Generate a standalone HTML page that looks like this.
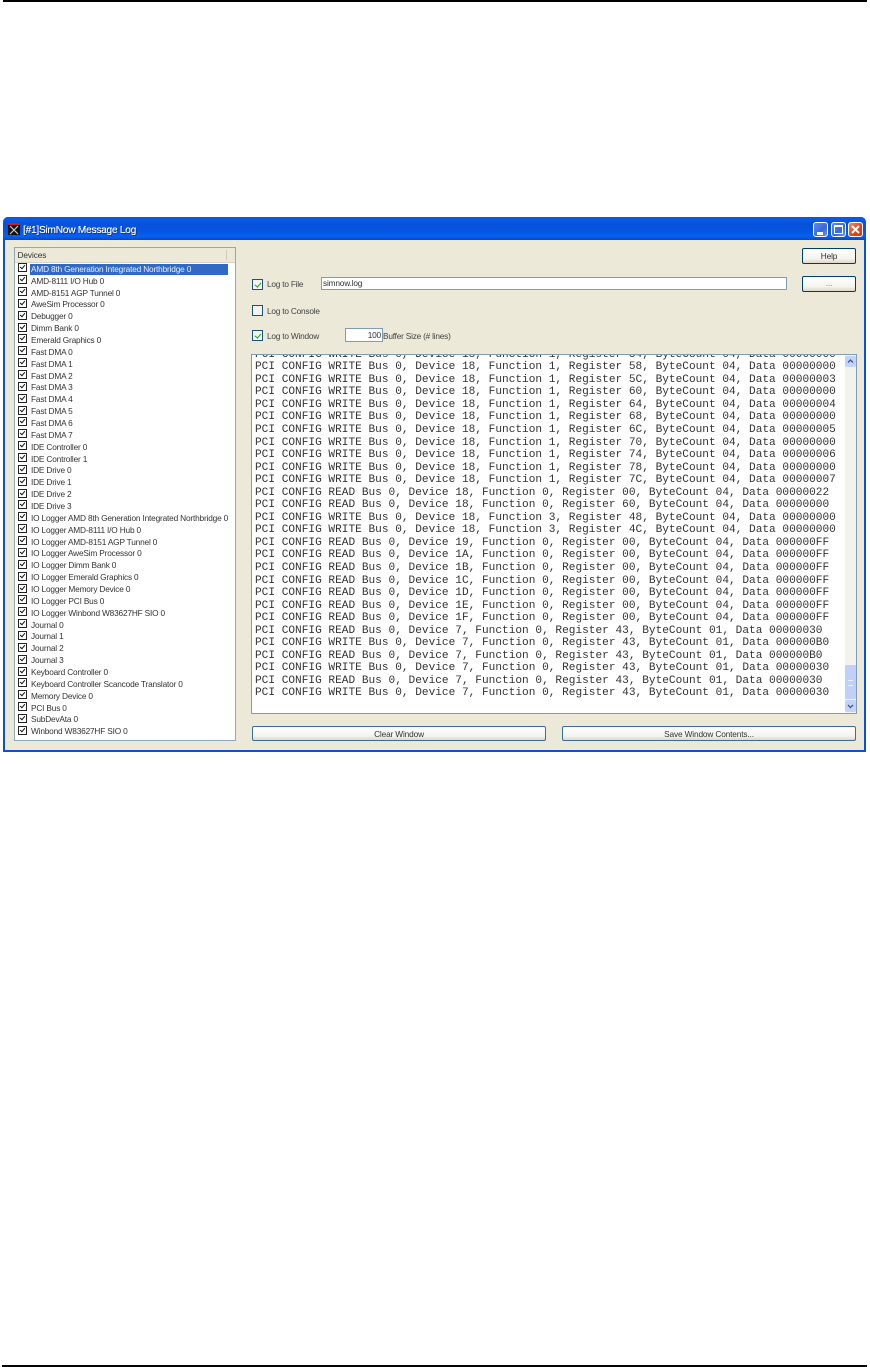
<!DOCTYPE html>
<html><head><meta charset="utf-8"><style>
html,body{margin:0;padding:0;background:#fff}
body{width:870px;height:1367px;position:relative;overflow:hidden;font-family:"Liberation Sans",sans-serif}
.a{position:absolute;white-space:nowrap}
.win{left:3px;top:217px;width:863px;height:535px;background:#0a4fd8;border-radius:5px 5px 0 0}
.title{left:3px;top:217px;width:863px;height:23px;border-radius:5px 5px 0 0;background:linear-gradient(#0a55d8 0,#0a5ae6 8%,#0652dc 30%,#0554e2 60%,#0660f0 85%,#0348c8 100%)}
.body{left:5px;top:240px;width:859px;height:510px;background:#ece9d8}
.tb{top:222px;width:15px;height:15px;border:1px solid #fff;box-sizing:border-box;border-radius:3px;background:linear-gradient(135deg,#5c8cf0,#3a66dc 60%,#6a96f4)}
.list{left:14px;top:247px;width:222px;height:494px;border:1px solid #8fa9bf;box-sizing:border-box;background:#fff}
.row{height:11.86px;line-height:11.86px;position:relative;font-size:8.3px;letter-spacing:-.18px;color:#333;padding-left:16px;white-space:nowrap}
.row i{position:absolute;left:3px;top:-0.5px;width:7px;height:7px;border:1px solid #222;background:#fff}
.row i:after{content:"";position:absolute;left:1.5px;top:0;width:2px;height:4px;border:solid #111;border-width:0 1.4px 1.4px 0;transform:rotate(40deg)}
.lbl{font-size:8.3px;letter-spacing:-.22px;color:#444;line-height:12px}
.cb{left:252px;width:11px;height:11px;box-sizing:border-box;border:1px solid #1c5180;background:#f4f4ee}
.cb.on:after{content:"";position:absolute;left:3px;top:0.5px;width:2.5px;height:5px;border:solid #21a121;border-width:0 1.6px 1.6px 0;transform:rotate(40deg)}
.inp{box-sizing:border-box;border:1px solid #7f9db9;background:#fff;font-size:8.3px;letter-spacing:-.18px;color:#333}
.btn{box-sizing:border-box;border:1px solid #003c74;border-radius:2px;background:linear-gradient(#fff,#f4f3ec 70%,#dcd8c8);text-align:center;font-size:8.3px;letter-spacing:-.15px;color:#333}
.log{left:251px;top:354px;width:606px;height:360px;box-sizing:border-box;border:1px solid #7f9db9;background:#fff;overflow:hidden}
.log pre{position:absolute;left:3px;top:-6.3px;margin:0;font:11.13px/12.54px "Liberation Mono",monospace;color:#333;filter:blur(.2px)}
</style></head><body>
<div class="a" style="left:3px;top:0;width:864px;height:1.5px;background:#000"></div>
<div class="a" style="left:2px;top:1365px;width:865px;height:1.5px;background:#000"></div>

<div class="a win"></div>
<div class="a title"></div>
<div class="a body"></div>
<div class="a" style="left:8px;top:223px;width:12px;height:12px;background:#111"></div>
<svg class="a" style="left:8px;top:223px" width="12" height="12"><rect x="0" y="0" width="12" height="2" fill="#d02020"/><path d="M2 3L10 11M10 3L2 11" stroke="#ccc" stroke-width="1.2"/></svg>
<div class="a" style="left:23px;top:223px;font-size:10.2px;letter-spacing:-.27px;line-height:15px;color:#fff;text-shadow:1px 1px 0 #0a2f9a,.3px 0 0 #fff">[#1]SimNow Message Log</div>
<div class="a tb" style="left:813px"><div class="a" style="left:3px;top:9px;width:6px;height:3px;background:#fff"></div></div>
<div class="a tb" style="left:831px"><div class="a" style="left:2px;top:2px;width:9px;height:9px;box-sizing:border-box;border:1px solid #fff;border-top-width:2px"></div></div>
<div class="a tb" style="left:848px;background:linear-gradient(135deg,#f08a68,#dc4a26 55%,#c43a18)"><svg class="a" style="left:0;top:0" width="13" height="13"><path d="M3 3L10 10M10 3L3 10" stroke="#fff" stroke-width="2"/></svg></div>

<div class="a list">
<div style="height:14px;background:#ece9d8;border-bottom:1px solid #d8d4c4;font-size:8.3px;letter-spacing:-.1px;line-height:14px;color:#333;padding-left:2.5px;position:relative">Devices<div class="a" style="right:8px;top:2px;width:1px;height:10px;background:#d0ccbc"></div></div>
<div class="a" style="left:15px;top:16px;width:198px;height:11px;background:#316ac5"></div>
<div class="a" style="left:0;top:15.8px;width:220px">
<div class="row" style="color:#e8eefa"><i></i>AMD 8th Generation Integrated Northbridge 0</div>
<div class="row"><i></i>AMD-8111 I/O Hub 0</div>
<div class="row"><i></i>AMD-8151 AGP Tunnel 0</div>
<div class="row"><i></i>AweSim Processor 0</div>
<div class="row"><i></i>Debugger 0</div>
<div class="row"><i></i>Dimm Bank 0</div>
<div class="row"><i></i>Emerald Graphics 0</div>
<div class="row"><i></i>Fast DMA 0</div>
<div class="row"><i></i>Fast DMA 1</div>
<div class="row"><i></i>Fast DMA 2</div>
<div class="row"><i></i>Fast DMA 3</div>
<div class="row"><i></i>Fast DMA 4</div>
<div class="row"><i></i>Fast DMA 5</div>
<div class="row"><i></i>Fast DMA 6</div>
<div class="row"><i></i>Fast DMA 7</div>
<div class="row"><i></i>IDE Controller 0</div>
<div class="row"><i></i>IDE Controller 1</div>
<div class="row"><i></i>IDE Drive 0</div>
<div class="row"><i></i>IDE Drive 1</div>
<div class="row"><i></i>IDE Drive 2</div>
<div class="row"><i></i>IDE Drive 3</div>
<div class="row"><i></i>IO Logger AMD 8th Generation Integrated Northbridge 0</div>
<div class="row"><i></i>IO Logger AMD-8111 I/O Hub 0</div>
<div class="row"><i></i>IO Logger AMD-8151 AGP Tunnel 0</div>
<div class="row"><i></i>IO Logger AweSim Processor 0</div>
<div class="row"><i></i>IO Logger Dimm Bank 0</div>
<div class="row"><i></i>IO Logger Emerald Graphics 0</div>
<div class="row"><i></i>IO Logger Memory Device 0</div>
<div class="row"><i></i>IO Logger PCI Bus 0</div>
<div class="row"><i></i>IO Logger Winbond W83627HF SIO 0</div>
<div class="row"><i></i>Journal 0</div>
<div class="row"><i></i>Journal 1</div>
<div class="row"><i></i>Journal 2</div>
<div class="row"><i></i>Journal 3</div>
<div class="row"><i></i>Keyboard Controller 0</div>
<div class="row"><i></i>Keyboard Controller Scancode Translator 0</div>
<div class="row"><i></i>Memory Device 0</div>
<div class="row"><i></i>PCI Bus 0</div>
<div class="row"><i></i>SubDevAta 0</div>
<div class="row"><i></i>Winbond W83627HF SIO 0</div>
</div>
</div>

<div class="a btn" style="left:802px;top:248px;width:54px;height:16px;line-height:14px">Help</div>
<div class="a btn" style="left:802px;top:276px;width:54px;height:16px;line-height:13px;color:#888">...</div>

<div class="a cb on" style="top:279px"></div>
<div class="a lbl" style="left:267px;top:278px">Log to File</div>
<div class="a inp" style="left:321px;top:277px;width:466px;height:13px;line-height:11px;padding-left:1px">simnow.log</div>
<div class="a cb" style="top:305px"></div>
<div class="a lbl" style="left:267px;top:305px">Log to Console</div>
<div class="a cb on" style="top:330px"></div>
<div class="a lbl" style="left:267px;top:330px">Log to Window</div>
<div class="a inp" style="left:345px;top:328px;width:38px;height:14px;line-height:12px;text-align:right;padding-right:1px">100</div>
<div class="a lbl" style="left:383px;top:330px">Buffer Size (# lines)</div>

<div class="a log"><pre>PCI CONFIG WRITE Bus 0, Device 18, Function 1, Register 54, ByteCount 04, Data 00000000
PCI CONFIG WRITE Bus 0, Device 18, Function 1, Register 58, ByteCount 04, Data 00000000
PCI CONFIG WRITE Bus 0, Device 18, Function 1, Register 5C, ByteCount 04, Data 00000003
PCI CONFIG WRITE Bus 0, Device 18, Function 1, Register 60, ByteCount 04, Data 00000000
PCI CONFIG WRITE Bus 0, Device 18, Function 1, Register 64, ByteCount 04, Data 00000004
PCI CONFIG WRITE Bus 0, Device 18, Function 1, Register 68, ByteCount 04, Data 00000000
PCI CONFIG WRITE Bus 0, Device 18, Function 1, Register 6C, ByteCount 04, Data 00000005
PCI CONFIG WRITE Bus 0, Device 18, Function 1, Register 70, ByteCount 04, Data 00000000
PCI CONFIG WRITE Bus 0, Device 18, Function 1, Register 74, ByteCount 04, Data 00000006
PCI CONFIG WRITE Bus 0, Device 18, Function 1, Register 78, ByteCount 04, Data 00000000
PCI CONFIG WRITE Bus 0, Device 18, Function 1, Register 7C, ByteCount 04, Data 00000007
PCI CONFIG READ Bus 0, Device 18, Function 0, Register 00, ByteCount 04, Data 00000022
PCI CONFIG READ Bus 0, Device 18, Function 0, Register 60, ByteCount 04, Data 00000000
PCI CONFIG WRITE Bus 0, Device 18, Function 3, Register 48, ByteCount 04, Data 00000000
PCI CONFIG WRITE Bus 0, Device 18, Function 3, Register 4C, ByteCount 04, Data 00000000
PCI CONFIG READ Bus 0, Device 19, Function 0, Register 00, ByteCount 04, Data 000000FF
PCI CONFIG READ Bus 0, Device 1A, Function 0, Register 00, ByteCount 04, Data 000000FF
PCI CONFIG READ Bus 0, Device 1B, Function 0, Register 00, ByteCount 04, Data 000000FF
PCI CONFIG READ Bus 0, Device 1C, Function 0, Register 00, ByteCount 04, Data 000000FF
PCI CONFIG READ Bus 0, Device 1D, Function 0, Register 00, ByteCount 04, Data 000000FF
PCI CONFIG READ Bus 0, Device 1E, Function 0, Register 00, ByteCount 04, Data 000000FF
PCI CONFIG READ Bus 0, Device 1F, Function 0, Register 00, ByteCount 04, Data 000000FF
PCI CONFIG READ Bus 0, Device 7, Function 0, Register 43, ByteCount 01, Data 00000030
PCI CONFIG WRITE Bus 0, Device 7, Function 0, Register 43, ByteCount 01, Data 000000B0
PCI CONFIG READ Bus 0, Device 7, Function 0, Register 43, ByteCount 01, Data 000000B0
PCI CONFIG WRITE Bus 0, Device 7, Function 0, Register 43, ByteCount 01, Data 00000030
PCI CONFIG READ Bus 0, Device 7, Function 0, Register 43, ByteCount 01, Data 00000030
PCI CONFIG WRITE Bus 0, Device 7, Function 0, Register 43, ByteCount 01, Data 00000030</pre>
<div class="a" style="left:593px;top:0;width:12px;height:358px;background:#f3f3ee"></div>
<div class="a" style="left:593px;top:1px;width:11px;height:11px;background:#c3d3f8;border-radius:2px"></div>
<svg class="a" style="left:593px;top:1px" width="11" height="11"><path d="M3 6.5L5.5 4L8 6.5" stroke="#3a5a9a" stroke-width="1.3" fill="none"/></svg>
<div class="a" style="left:593px;top:310px;width:11px;height:34px;background:#c0d0f8;border-radius:1px"></div>
<div class="a" style="left:596px;top:325px;width:5px;height:4px;border-top:1px solid #eef2fe;border-bottom:1px solid #eef2fe"></div>
<div class="a" style="left:593px;top:345px;width:11px;height:12px;background:#c3d3f8;border-radius:2px"></div>
<svg class="a" style="left:593px;top:345px" width="11" height="12"><path d="M3 5L5.5 7.5L8 5" stroke="#3a5a9a" stroke-width="1.3" fill="none"/></svg>
</div>

<div class="a btn" style="left:252px;top:726px;width:294px;height:15px;line-height:14px;border-color:#3a6ea0">Clear Window</div>
<div class="a btn" style="left:562px;top:726px;width:294px;height:15px;line-height:14px;border-color:#3a6ea0">Save Window Contents...</div>
</body></html>
